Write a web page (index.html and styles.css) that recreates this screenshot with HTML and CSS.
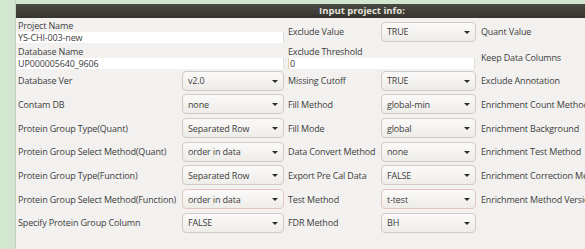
FILE: index.html
```html
<!DOCTYPE html>
<html>
<head>
<meta charset="utf-8">
<link rel="stylesheet" href="styles.css">
</head>
<body>
<div class="page">
  <div class="side"></div>
  <div class="main">
    <div class="topband"></div>
    <div class="panel">
      <div class="header">Input project info:</div>
      <div class="grid">
        <!-- row A -->
        <div class="stack span2 rowa">
          <div class="slabel">Project Name</div>
          <div class="input">YS-CHI-003-new</div>
        </div>
        <div class="label l2">Exclude Value</div>
        <div class="cell"><div class="select s2"><span>TRUE</span><i class="arr"></i></div></div>
        <div class="label l3">Quant Value</div>
        <!-- row B -->
        <div class="stack span2 rowb">
          <div class="slabel">Database Name</div>
          <div class="input">UP000005640_9606</div>
        </div>
        <div class="stack span2 rowb c2">
          <div class="slabel">Exclude Threshold</div>
          <div class="input in2">0</div>
        </div>
        <div class="label l3">Keep Data Columns</div>

        <div class="label l1">Database Ver</div>
        <div class="cell"><div class="select"><span>v2.0</span><i class="arr"></i></div></div>
        <div class="label l2">Missing Cutoff</div>
        <div class="cell"><div class="select s2"><span>TRUE</span><i class="arr"></i></div></div>
        <div class="label l3">Exclude Annotation</div>

        <div class="label l1">Contam DB</div>
        <div class="cell"><div class="select"><span>none</span><i class="arr"></i></div></div>
        <div class="label l2">Fill Method</div>
        <div class="cell"><div class="select s2"><span>global-min</span><i class="arr"></i></div></div>
        <div class="label l3">Enrichment Count Method</div>

        <div class="label l1">Protein Group Type(Quant)</div>
        <div class="cell"><div class="select"><span>Separated Row</span><i class="arr"></i></div></div>
        <div class="label l2">Fill Mode</div>
        <div class="cell"><div class="select s2"><span>global</span><i class="arr"></i></div></div>
        <div class="label l3">Enrichment Background</div>

        <div class="label l1">Protein Group Select Method(Quant)</div>
        <div class="cell"><div class="select"><span>order in data</span><i class="arr"></i></div></div>
        <div class="label l2">Data Convert Method</div>
        <div class="cell"><div class="select s2"><span>none</span><i class="arr"></i></div></div>
        <div class="label l3">Enrichment Test Method</div>

        <div class="label l1">Protein Group Type(Function)</div>
        <div class="cell"><div class="select"><span>Separated Row</span><i class="arr"></i></div></div>
        <div class="label l2">Export Pre Cal Data</div>
        <div class="cell"><div class="select s2"><span>FALSE</span><i class="arr"></i></div></div>
        <div class="label l3">Enrichment Correction Method</div>

        <div class="label l1">Protein Group Select Method(Function)</div>
        <div class="cell"><div class="select warm"><span>order in data</span><i class="arr"></i></div></div>
        <div class="label l2">Test Method</div>
        <div class="cell"><div class="select s2 warm"><span>t-test</span><i class="arr"></i></div></div>
        <div class="label l3">Enrichment Method Version</div>

        <div class="label l1">Specify Protein Group Column</div>
        <div class="cell"><div class="select"><span>FALSE</span><i class="arr"></i></div></div>
        <div class="label l2">FDR Method</div>
        <div class="cell"><div class="select s2"><span>BH</span><i class="arr"></i></div></div>
        <div class="label l3"></div>
      </div>
    </div>
  </div>
</div>
</body>
</html>
```

FILE: styles.css
```css
html, body {
  margin: 0;
  padding: 0;
  width: 585px;
  height: 249px;
  overflow: hidden;
  background: #f2f1ef;
}
.page {
  display: flex;
  width: 585px;
  height: 249px;
  font-family: "Open Sans", Lato, sans-serif;
  font-size: 9px;
  letter-spacing: -0.15px;
  color: #3d3d3d;
}
.side {
  width: 16px;
  flex: none;
  background: #d2e8ce;
  border-right: 1px solid #c6cfc4;
  box-sizing: border-box;
}
.main {
  flex: 1;
  display: flex;
  flex-direction: column;
  min-width: 0;
}
.topband {
  height: 4px;
  background: #d2e8ce;
}
.panel {
  flex: 1;
  background: #f2f1ef;
  overflow: hidden;
}
.header {
  height: 14px;
  line-height: 14px;
  background: linear-gradient(#4a4945, #35342f);
  color: #e4e1da;
  font-weight: bold;
  font-size: 9.5px;
  letter-spacing: 0;
  padding-left: 303px;
  white-space: nowrap;
}
.grid {
  display: grid;
  grid-template-columns: 166px 103px 96px 96px 200px;
  grid-template-rows: 27px 24px repeat(7, 23.67px);
  white-space: nowrap;
}
.span2 { grid-column: span 2; }
.stack {
  display: flex;
  flex-direction: column;
  justify-content: flex-end;
}
.rowa { padding-bottom: 2px; }
.rowb { padding-bottom: 0; }
.slabel {
  line-height: 11px;
  padding-left: 2px;
  margin-bottom: 1px;
}
.c2 .slabel { padding-left: 3px; }
.input {
  height: 11px;
  line-height: 11px;
  background: #ffffff;
  border-right: 1px solid #e0ddd8;
  padding-left: 2px;
  margin-right: 1px;
  overflow: hidden;
}
.input.in2 {
  margin-left: 3px;
  margin-right: 2px;
  padding-left: 1px;
  border-left: 1px solid #e8c9a8;
}
.label {
  display: flex;
  align-items: center;
  overflow: hidden;
}
.l1 { padding-left: 2px; }
.l2 { padding-left: 3px; }
.l3 { padding-left: 4px; }
.cell {
  display: flex;
  align-items: center;
}
.select {
  position: relative;
  width: 102px;
  height: 20px;
  box-sizing: border-box;
  border: 1px solid #cfcbc4;
  border-radius: 4px;
  background: linear-gradient(#fbfaf9, #eeece8);
  display: flex;
  align-items: center;
  padding-left: 5px;
}
.select.s2 { width: 95px; }
.select.warm { border-color: #e3c6bd; }
.arr {
  position: absolute;
  right: 5px;
  top: 8px;
  width: 0;
  height: 0;
  border-left: 3px solid transparent;
  border-right: 3px solid transparent;
  border-top: 3.5px solid #2c2c2c;
}
```
